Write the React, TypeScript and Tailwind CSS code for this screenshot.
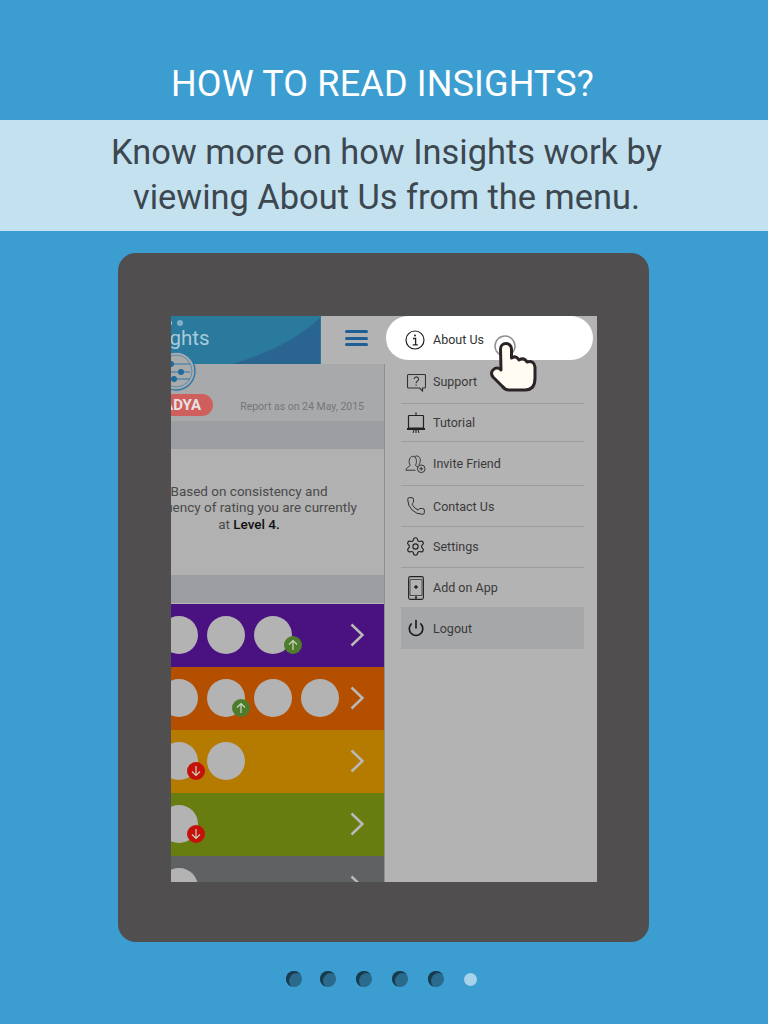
import { Phone, Settings, Power } from "lucide-react"
import type { ReactNode } from "react"

const font = { fontFamily: "Roboto, sans-serif" }

function InfoIcon() {
  return (
    <svg width="20" height="20" viewBox="0 0 20 20" fill="none" stroke="#222" strokeWidth="1.2">
      <circle cx="10" cy="10" r="9" />
      <circle cx="10" cy="5.6" r="1" fill="#222" stroke="none" />
      <path d="M8 8.5h2.6v6M7.8 14.8h5" strokeWidth="1.3" />
    </svg>
  )
}

function SupportIcon() {
  return (
    <svg width="20" height="20" viewBox="0 0 20 20" fill="none" stroke="#333" strokeWidth="1.1">
      <path d="M2.5 2.5h16a1 1 0 0 1 1 1v11.500a1 1 0 0 1-1 1h-2v3l-3-3H2.500a1 1 0 0 1-1-1V3.500a1 1 0 0 1 1-1z" />
      <path d="M8.200 7a2.200 2.200 0 1 1 3.300 2c-1 .6-1.400 1-1.400 2.200M10.100 12.600v1.200" />
    </svg>
  )
}

function TutorialIcon() {
  return (
    <svg width="20" height="22" viewBox="0 0 20 22" fill="none" stroke="#222" strokeWidth="1.2">
      <path d="M10 0.500v3" />
      <rect x="2.500" y="3.500" width="15" height="12.500" rx="0.500" />
      <path d="M1 17h18" strokeWidth="2" />
      <path d="M10 17v4M7 21l1.500-4M13 21l-1.500-4" strokeWidth="1" />
    </svg>
  )
}

function InviteIcon() {
  return (
    <svg width="22" height="20" viewBox="0 0 22 20" fill="none" stroke="#333" strokeWidth="1">
      <path d="M1 16.500c0-3 3.500-3.500 4.500-5-2-3-1.500-9 2.500-9.500 4-.5 5 5.500 3 9.500 1 1 2 1.500 3 2M1 16.500h10" />
      <path d="M10.500 2c3-1.500 6 1 5.500 5-.2 1.500-.7 3-1.500 4" />
      <circle cx="17" cy="15" r="4" />
      <path d="M17 13v4M15 15h4" />
    </svg>
  )
}

function AddAppIcon() {
  return (
    <svg width="16" height="24" viewBox="0 0 16 24" fill="none" stroke="#222" strokeWidth="1.100">
      <rect x="0.600" y="0.600" width="14.800" height="22.800" rx="1.800" />
      <path d="M2 3.500h12v16H2z" strokeWidth="0.700" />
      <path d="M8 9v4M6 11h4" strokeWidth="1.300" />
      <circle cx="8" cy="21.500" r="0.600" fill="#222" />
    </svg>
  )
}

function MenuRow({ icon, label, className }: { icon: ReactNode; label: string; className: string }) {
  return (
    <div className={`flex items-center ${className}`}>
      <div className="w-8 pl-[4px] flex items-center justify-center pr-[7px] shrink-0">{icon}</div>
      <span className="pt-[2px] text-[12.500px] text-[#3a3a3a]">{label}</span>
    </div>
  )
}

function Badge({ up, left }: { up: boolean; left: string }) {
  return (
    <div className={`absolute top-[20px] ${left} w-[18px] h-[18px] rounded-full flex items-center justify-center ${up ? "bg-[#4f7c2c]" : "bg-[#c4120a]"}`}>
      <svg width="12" height="12" viewBox="0 0 12 12" fill="none" stroke="#c9d6c0" strokeWidth="1.200">
        {up ? <path d="M6 11V1.500M2 5.500l4-4 4 4" /> : <path d="M6 1v9.500M2 6.500l4 4 4-4" />}
      </svg>
    </div>
  )
}

function Circle({ badge }: { badge?: ReactNode }) {
  return (
    <div className="relative w-[38px] h-[38px] rounded-full bg-[#b3b3b3] shrink-0">{badge}</div>
  )
}

function ScoreRow({ color, children }: { color: string; children: ReactNode }) {
  return (
    <div className={`h-[63px] shrink-0 flex items-center justify-between pr-[21px] pb-[1px] ${color}`}>
      <div className="flex gap-[9px]">{children}</div>
      <svg width="14" height="24" viewBox="0 0 14 24" fill="none" stroke="#b9b9b9" strokeWidth="2.500">
        <path d="M1.500 1.500L12.500 12L1.500 22.500" />
      </svg>
    </div>
  )
}

export default function App() {
  return (
    <div className="w-[768px] h-[1024px] bg-[#3b9dd0] flex flex-col overflow-hidden" style={font}>
      <div className="h-[120px] shrink-0 flex items-center justify-center pt-[47px] pr-[3px] text-[36px] tracking-[0.150px] text-white">
        HOW TO READ INSIGHTS?
      </div>
      <div className="h-[111px] shrink-0 bg-[#c3e1ef] flex flex-col items-center justify-center pb-[2px] pl-[5px] text-[34.400px] leading-[45px] text-[#3c4750]">
        <div>Know more on how Insights work by</div>
        <div>viewing About Us from the menu.</div>
      </div>

      <div className="mt-[22px] ml-[118px] w-[531px] h-[689px] shrink-0 rounded-[18px] bg-[#514e4f] pt-[63px] pl-[53px] pr-[52px]">
        <div className="relative h-[566px] flex overflow-hidden">
          {/* dimmed app behind the drawer */}
          <div className="relative w-[214px] shrink-0 overflow-hidden">
            <div className="w-[272px] -ml-[58px] flex flex-col">
              <div className="h-[48px] flex">
                <div className="relative w-[208px] bg-[#2a7a9e] overflow-hidden pl-[24px] pt-[8px] text-[20.500px] text-[#a9cad9] leading-[28px]">
                  Insights
                  <svg className="absolute inset-0" width="208" height="48" viewBox="0 0 208 48">
                    <path d="M119 48C155 38 185 22 207 2V48z" fill="#2a6491" />
                  </svg>
                  <div className="absolute top-[4px] left-[53px] flex gap-[5px]">
                    <div className="w-[6px] h-[6px] rounded-full bg-[#a9cad9]" />
                    <div className="w-[6px] h-[6px] rounded-full bg-[#7fb0c6]" />
                  </div>
                </div>
                <div className="flex-1 bg-[#b3b3b3] flex items-center justify-center pb-[4px] pl-[6px]">
                  <div className="w-[23px] flex flex-col gap-[3.500px]">
                    <div className="h-[3px] rounded-sm bg-[#1f5f95]" />
                    <div className="h-[3px] rounded-sm bg-[#1f5f95]" />
                    <div className="h-[3px] rounded-sm bg-[#1f5f95]" />
                  </div>
                </div>
              </div>
              <div className="h-[57px] bg-[#a8a9ab] flex items-end justify-between pr-[21px] pb-[5px]">
                <div className="ml-[12px] h-[22px] w-[88px] rounded-full bg-[#cf5f5c] flex items-center justify-end pr-[12px] text-[15px] font-bold text-[#e6e2e2]">
                  ADYA
                </div>
                <span className="text-[10.500px] leading-[18px] text-[#757678]">Report as on 24 May, 2015</span>
              </div>
              <div className="h-[28px] bg-[#9d9ea1]" />
              <div className="h-[126px] bg-[#b1b1b1] flex items-center justify-center pb-[9px] text-center text-[13.500px] leading-[16.500px] text-[#4a4a4a]">
                <div className="whitespace-nowrap">
                  Based on consistency and
                  <br />
                  frequency of rating you are currently
                  <br />
                  at <span className="font-medium text-[#111]">Level 4.</span>
                </div>
              </div>
              <div className="h-[29px] bg-[#9d9ea1] border-b border-[#b5b5b8]" />
              <ScoreRow color="bg-[#4a1180]">
                <Circle />
                <Circle />
                <Circle />
                <Circle badge={<Badge up left="left-[30px]" />} />
              </ScoreRow>
              <ScoreRow color="bg-[#b54f00]">
                <Circle />
                <Circle />
                <Circle badge={<Badge up left="left-[25px]" />} />
                <Circle />
                <Circle />
              </ScoreRow>
              <ScoreRow color="bg-[#b57a00]">
                <Circle />
                <Circle badge={<Badge up={false} left="left-[27px]" />} />
                <Circle />
              </ScoreRow>
              <ScoreRow color="bg-[#677d10]">
                <Circle />
                <Circle badge={<Badge up={false} left="left-[27px]" />} />
              </ScoreRow>
              <ScoreRow color="bg-[#5f6163]">
                <Circle />
                <Circle />
              </ScoreRow>
            </div>
            {/* filter badge overlapping the header */}
            <svg className="absolute left-[-15px] top-[35px]" width="40" height="40" viewBox="0 0 40 40" fill="none">
              <circle cx="20" cy="20" r="19" fill="#a9aaac" stroke="#2a78a8" strokeWidth="1.400" />
              <circle cx="20" cy="20" r="16" stroke="#2a78a8" strokeWidth="0.600" />
              <path d="M6 13h28M6 21h28M6 28h28" stroke="#2a78a8" strokeWidth="1" />
              <circle cx="15" cy="13" r="3" fill="#1f6a9c" />
              <circle cx="25" cy="21" r="3" fill="#1f6a9c" />
              <circle cx="18" cy="28" r="3" fill="#1f6a9c" />
            </svg>
            <div className="absolute top-[48px] right-0 bottom-0 w-px bg-[#8f9092]" />
          </div>

          {/* drawer */}
          <div className="flex-1 bg-[#b3b3b3] pt-[46px] pl-[16px] pr-[13px] flex flex-col">
            <MenuRow className="h-[42px] pb-[2px] border-b border-[#9c9c9c]" icon={<SupportIcon />} label="Support" />
            <MenuRow className="h-[38px] border-b border-[#9c9c9c]" icon={<TutorialIcon />} label="Tutorial" />
            <MenuRow className="h-[44px] border-b border-[#9c9c9c]" icon={<InviteIcon />} label="Invite Friend" />
            <MenuRow className="h-[41px] border-b border-[#9c9c9c]" icon={<Phone size={20} strokeWidth={1.100} color="#222" />} label="Contact Us" />
            <MenuRow className="h-[41px] pb-[1px] border-b border-[#9c9c9c]" icon={<Settings size={21} strokeWidth={1.300} color="#222" />} label="Settings" />
            <MenuRow className="h-[39px]" icon={<AddAppIcon />} label="Add on App" />
            <MenuRow className="h-[42px] bg-[#a6a7a9]" icon={<Power size={18} strokeWidth={2.200} color="#1c1c1c" />} label="Logout" />
          </div>

          {/* highlighted item */}
          <div className="absolute left-[215px] top-0 w-[207px] h-[44px] rounded-[22px] bg-white flex items-center pl-[19px] pt-[3px]">
            <InfoIcon />
            <span className="ml-[8px] pt-[2px] text-[12.500px] text-[#333]">About Us</span>
          </div>

          {/* pointer */}
          <svg className="absolute left-[317px] top-[19px]" width="56" height="60" viewBox="0 0 56 60" fill="none">
            <circle cx="17" cy="11" r="10" stroke="#8f8f8f" strokeWidth="1.500" fill="#ffffff" />
            <path
              d="M12.500 14A5.500 5.500 0 0 1 23.500 14V23Q28 20 31 25Q36 22 39 27Q46 25 47 32V43Q47 55 37 55H21Q17 55 14 51L5 42Q2 38 5 35Q9 31 13 35Z"
              fill="#fffdf3"
              stroke="#2b2325"
              strokeWidth="3"
              strokeLinejoin="round"
            />
          </svg>
        </div>
      </div>

      <div className="mt-[29px] ml-[286px] flex items-center">
        <div className="w-4 h-4 rounded-full bg-[#2a6a8d] shadow-[inset_3px_2px_0_#173a4d]" />
        <div className="ml-[18px] w-4 h-4 rounded-full bg-[#2a6a8d] shadow-[inset_3px_2px_0_#173a4d]" />
        <div className="ml-[20px] w-4 h-4 rounded-full bg-[#2a6a8d] shadow-[inset_3px_2px_0_#173a4d]" />
        <div className="ml-[20px] w-4 h-4 rounded-full bg-[#2a6a8d] shadow-[inset_3px_2px_0_#173a4d]" />
        <div className="ml-[20px] w-4 h-4 rounded-full bg-[#2a6a8d] shadow-[inset_3px_2px_0_#173a4d]" />
        <div className="ml-[20px] w-[13px] h-[13px] rounded-full bg-[#a6d2ea]" />
      </div>
    </div>
  )
}
